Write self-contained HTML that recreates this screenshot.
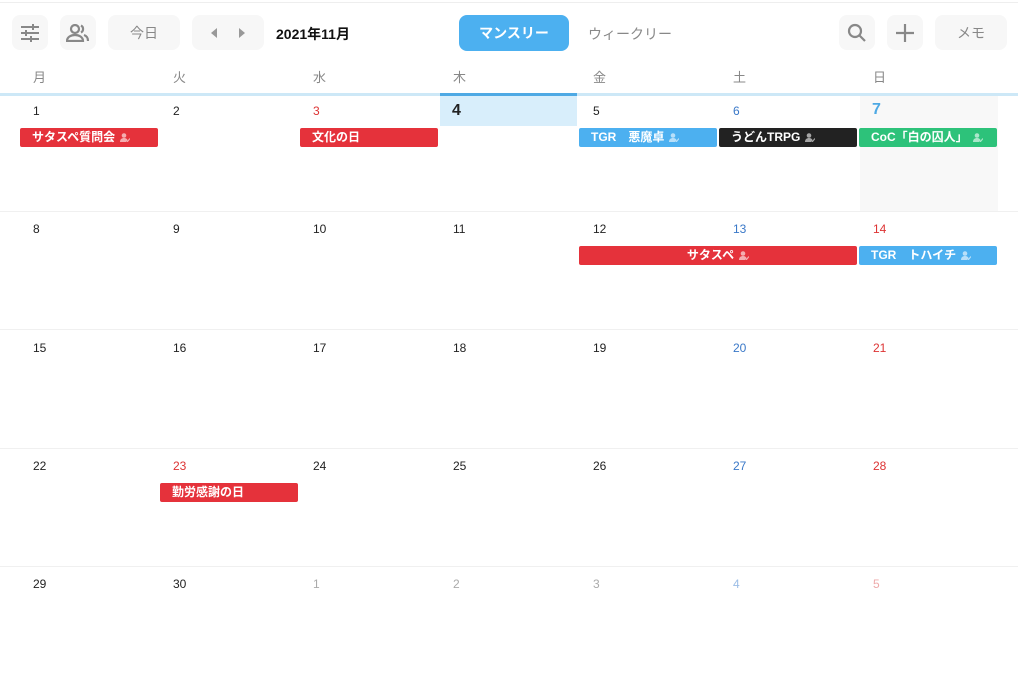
<!DOCTYPE html>
<html><head><meta charset="utf-8"><style>
*{margin:0;padding:0;box-sizing:border-box}
body{width:1018px;height:681px;background:#fff;font-family:"Liberation Sans","Noto Sans CJK JP",sans-serif;position:relative;overflow:hidden;color:#222}
.a{position:absolute}
.btn{position:absolute;top:15px;height:35px;background:#f7f7f7;border-radius:8px;color:#888;font-size:14px;display:flex;align-items:center;justify-content:center}
.wd{position:absolute;top:67px;font-size:13px;color:#888}
.dn{position:absolute;font-size:12px;color:#222}
.ev{position:absolute;height:19px;border-radius:2px;color:#fff;font-size:12px;font-weight:bold;line-height:19px;padding-left:12px;white-space:nowrap}
.ic{display:inline-block;width:10px;height:9px;margin-left:5px;vertical-align:-1px;opacity:.6}
.hl{position:absolute;left:0;width:1018px;height:1px;background:#f0f0f0}
</style></head><body>
<div class="a" style="left:0;top:2px;width:1018px;height:1px;background:#eee"></div>
<div class="btn" style="left:12px;width:36px"><svg width="20" height="18" viewBox="0 0 20 18" fill="none" stroke="#888" stroke-width="2"><path d="M1 3h18M1 9h18M1 15h18"/><path d="M13 0v6M6 6v6M11 12v6" /></svg></div>
<div class="btn" style="left:60px;width:36px"><svg width="24" height="18" viewBox="0 0 24 18" fill="none" stroke="#888" stroke-width="2.2"><circle cx="9" cy="5" r="4"/><path d="M1 17c0-4 4-6 8-6s8 2 8 6z"/><path d="M15 1.5a4 4 0 010 7M18 11c3 1 4 3 4 6"/></svg></div>
<div class="btn" style="left:108px;width:72px">今日</div>
<div class="btn" style="left:192px;width:72px;justify-content:space-around;padding:0 8px"><svg width="8" height="10"><path d="M7 0v10L1 5z" fill="#999"/></svg><svg width="8" height="10"><path d="M1 0v10l6-5z" fill="#999"/></svg></div>
<div class="a" style="left:276px;top:24px;font-size:14px;font-weight:bold;color:#111">2021年11月</div>
<div class="a" style="left:459px;top:15px;width:110px;height:36px;background:#4cb0f0;border-radius:8px;color:#fff;font-size:14px;font-weight:bold;display:flex;align-items:center;justify-content:center">マンスリー</div>
<div class="a" style="left:588px;top:24px;font-size:14px;color:#888">ウィークリー</div>
<div class="btn" style="left:839px;width:36px"><svg width="20" height="20" viewBox="0 0 20 20" fill="none" stroke="#888" stroke-width="2.2"><circle cx="8" cy="8" r="6"/><path d="M12.5 12.5L18 18"/></svg></div>
<div class="btn" style="left:887px;width:36px"><svg width="20" height="20" viewBox="0 0 20 20" stroke="#888" stroke-width="2.2"><path d="M10 1v18M1 10h18"/></svg></div>
<div class="btn" style="left:935px;width:72px">メモ</div>

<div class="wd" style="left:33px">月</div><div class="wd" style="left:173px">火</div><div class="wd" style="left:313px">水</div><div class="wd" style="left:453px">木</div><div class="wd" style="left:593px">金</div><div class="wd" style="left:733px">土</div><div class="wd" style="left:873px">日</div>
<div class="a" style="left:0;top:93px;width:1018px;height:3px;background:#cde8f7"></div>
<div class="a" style="left:440px;top:93px;width:137px;height:3px;background:#4ea9e4"></div>
<div class="a" style="left:440px;top:96px;width:137px;height:30px;background:#d8eefb"></div>
<div class="a" style="left:860px;top:96px;width:138px;height:115px;background:#f8f8f8"></div>
<div class="hl" style="top:211px"></div><div class="hl" style="top:329px"></div><div class="hl" style="top:448px"></div><div class="hl" style="top:566px"></div>

<div class="dn" style="left:33px;top:104px">1</div><div class="dn" style="left:173px;top:104px">2</div><div class="dn" style="left:313px;top:104px;color:#d33">3</div><div class="dn" style="left:452px;top:102px;font-size:16px;font-weight:bold">4</div><div class="dn" style="left:593px;top:104px">5</div><div class="dn" style="left:733px;top:104px;color:#3a78c8">6</div><div class="dn" style="left:872px;top:101px;font-size:16px;font-weight:bold;color:#4ea9e4">7</div>
<div class="dn" style="left:33px;top:222px">8</div><div class="dn" style="left:173px;top:222px">9</div><div class="dn" style="left:313px;top:222px">10</div><div class="dn" style="left:453px;top:222px">11</div><div class="dn" style="left:593px;top:222px">12</div><div class="dn" style="left:733px;top:222px;color:#3a78c8">13</div><div class="dn" style="left:873px;top:222px;color:#d33">14</div>
<div class="dn" style="left:33px;top:341px">15</div><div class="dn" style="left:173px;top:341px">16</div><div class="dn" style="left:313px;top:341px">17</div><div class="dn" style="left:453px;top:341px">18</div><div class="dn" style="left:593px;top:341px">19</div><div class="dn" style="left:733px;top:341px;color:#3a78c8">20</div><div class="dn" style="left:873px;top:341px;color:#d33">21</div>
<div class="dn" style="left:33px;top:459px">22</div><div class="dn" style="left:173px;top:459px;color:#d33">23</div><div class="dn" style="left:313px;top:459px">24</div><div class="dn" style="left:453px;top:459px">25</div><div class="dn" style="left:593px;top:459px">26</div><div class="dn" style="left:733px;top:459px;color:#3a78c8">27</div><div class="dn" style="left:873px;top:459px;color:#d33">28</div>
<div class="dn" style="left:33px;top:577px">29</div><div class="dn" style="left:173px;top:577px">30</div><div class="dn" style="left:313px;top:577px;color:#aaa">1</div><div class="dn" style="left:453px;top:577px;color:#aaa">2</div><div class="dn" style="left:593px;top:577px;color:#aaa">3</div><div class="dn" style="left:733px;top:577px;color:#9bbde6">4</div><div class="dn" style="left:873px;top:577px;color:#eaa">5</div>

<svg width="0" height="0" style="position:absolute"><defs><symbol id="u" viewBox="0 0 10 9"><circle cx="4" cy="2.5" r="2.3" fill="#fff"/><path d="M0 9c0-3 2-4 4-4s3 1 3.5 2L6 9z" fill="#fff"/><path d="M6 7l1.5 1.5L10 5.5" stroke="#fff" fill="none" stroke-width="1.2"/></symbol></defs></svg>
<div class="ev" style="left:20px;top:128px;width:138px;background:#e5323b">サタスペ質問会<svg class="ic"><use href="#u"/></svg></div>
<div class="ev" style="left:300px;top:128px;width:138px;background:#e5323b">文化の日</div>
<div class="ev" style="left:579px;top:128px;width:138px;background:#4cb0f0">TGR　悪魔卓<svg class="ic"><use href="#u"/></svg></div>
<div class="ev" style="left:719px;top:128px;width:138px;background:#222">うどんTRPG<svg class="ic"><use href="#u"/></svg></div>
<div class="ev" style="left:859px;top:128px;width:138px;background:#2dc27a">CoC「白の囚人」<svg class="ic"><use href="#u"/></svg></div>
<div class="ev" style="left:579px;top:246px;width:278px;background:#e5323b;text-align:center;padding-left:0">サタスペ<svg class="ic"><use href="#u"/></svg></div>
<div class="ev" style="left:859px;top:246px;width:138px;background:#4cb0f0">TGR　トハイチ<svg class="ic"><use href="#u"/></svg></div>
<div class="ev" style="left:160px;top:483px;width:138px;background:#e5323b">勤労感謝の日</div>
</body></html>
